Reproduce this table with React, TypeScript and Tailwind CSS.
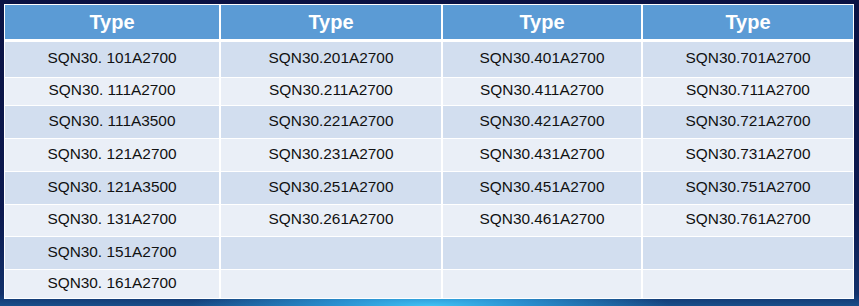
import React from "react";

const rows: [string, string, string, string][] = [
  ["SQN30. 101A2700", "SQN30.201A2700", "SQN30.401A2700", "SQN30.701A2700"],
  ["SQN30. 111A2700", "SQN30.211A2700", "SQN30.411A2700", "SQN30.711A2700"],
  ["SQN30. 111A3500", "SQN30.221A2700", "SQN30.421A2700", "SQN30.721A2700"],
  ["SQN30. 121A2700", "SQN30.231A2700", "SQN30.431A2700", "SQN30.731A2700"],
  ["SQN30. 121A3500", "SQN30.251A2700", "SQN30.451A2700", "SQN30.751A2700"],
  ["SQN30. 131A2700", "SQN30.261A2700", "SQN30.461A2700", "SQN30.761A2700"],
  ["SQN30. 151A2700", "", "", ""],
  ["SQN30. 161A2700", "", "", ""],
];

const heights = ["h-[35px]", "h-[27px]", "h-[32px]", "h-[32px]", "h-[32px]", "h-[31px]", "h-[32px]", "h-[28px]"];

export default function App() {
  return (
    <div
      className="w-[859px] h-[306px] overflow-hidden pt-[4px] pl-[4px] bg-[radial-gradient(ellipse_240px_26px_at_50%_100%,#40c2f4_0%,#2a8fcf_40%,transparent_100%),linear-gradient(180deg,#0a1243_0%,#0c1a50_70%,#11306a_96%,#184e8a_100%)]"
      style={{ fontFamily: '"Liberation Sans", Arial, sans-serif' }}
    >
      <div className="w-[850px] bg-white p-[1px] flex flex-col gap-y-[1px]">
        <div className="grid grid-cols-[214px_220px_198px_210px] gap-x-[2px] h-[34px] mb-[2px]">
          {[0, 1, 2, 3].map((i) => (
            <div
              key={i}
              className="bg-[#5b9bd5] flex items-center justify-center text-white font-bold text-[20px]"
            >
              Type
            </div>
          ))}
        </div>
        {rows.map((r, ri) => (
          <div
            key={ri}
            className={`grid grid-cols-[214px_220px_198px_210px] gap-x-[2px] ${heights[ri]}`}
          >
            {r.map((c, ci) => (
              <div
                key={ci}
                className={`${ri % 2 === 0 ? "bg-[#d2deef]" : "bg-[#eaeff7]"} flex items-center justify-center text-[#111111] text-[15.4px] pb-[3px]`}
              >
                {c}
              </div>
            ))}
          </div>
        ))}
      </div>
    </div>
  );
}
